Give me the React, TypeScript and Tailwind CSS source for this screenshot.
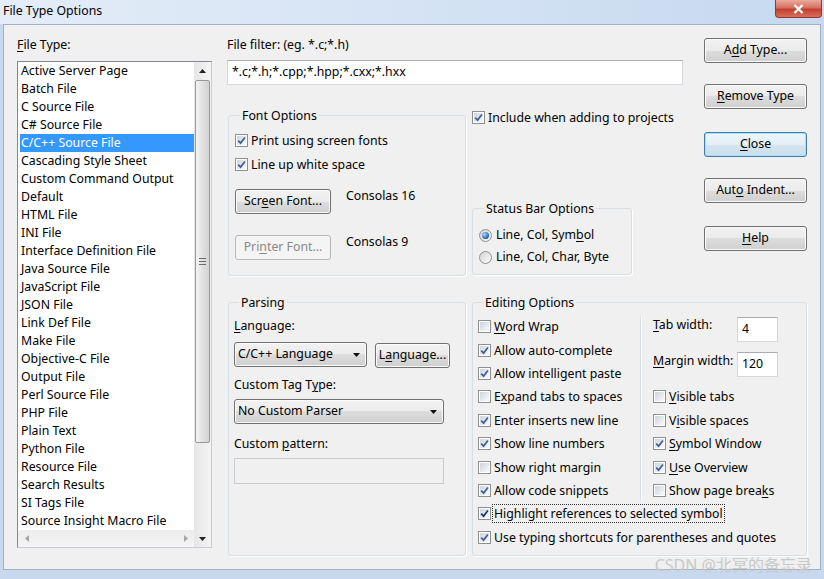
import React from "react";

const files = [
  "Active Server Page",
  "Batch File",
  "C Source File",
  "C# Source File",
  "C/C++ Source File",
  "Cascading Style Sheet",
  "Custom Command Output",
  "Default",
  "HTML File",
  "INI File",
  "Interface Definition File",
  "Java Source File",
  "JavaScript File",
  "JSON File",
  "Link Def File",
  "Make File",
  "Objective-C File",
  "Output File",
  "Perl Source File",
  "PHP File",
  "Plain Text",
  "Python File",
  "Resource File",
  "Search Results",
  "SI Tags File",
  "Source Insight Macro File",
];

const U = ({ children }: { children: React.ReactNode }) => (
  <span className="underline decoration-1 underline-offset-[2px]">{children}</span>
);

const Box = ({ on, dark }: { on?: boolean; dark?: boolean }) => (
  <span className="w-[13px] h-[13px] shrink-0 border border-[#8e8f8f] bg-white p-[1px] flex">
    <span className="flex-1 bg-[linear-gradient(135deg,#cfd5dd,#f8f9fb)] flex items-center justify-center">
      {on && (
        <svg width="9" height="9" viewBox="0 0 9 9">
          <path
            d="M1.2 4.6 L3.6 7.1 L7.9 1.6"
            fill="none"
            stroke={dark ? "#16367a" : "#3d5f96"}
            strokeWidth="1.7"
          />
        </svg>
      )}
    </span>
  </span>
);

const CheckRow = ({
  on,
  dark,
  children,
  className = "",
  focus,
}: {
  on?: boolean;
  dark?: boolean;
  children: React.ReactNode;
  className?: string;
  focus?: boolean;
}) => (
  <div className={"flex items-center " + className}>
    <Box on={on} dark={dark} />
    <span
      className={
        "ml-[1px] px-[1px] leading-[17px] whitespace-nowrap border border-dotted " +
        (focus ? "border-[#333]" : "border-transparent")
      }
    >
      {children}
    </span>
  </div>
);

const Radio = ({ on, children, className = "" }: { on?: boolean; children: React.ReactNode; className?: string }) => (
  <div className={"flex items-center " + className}>
    <span className="w-[13px] h-[13px] shrink-0 rounded-full border border-[#8e8f8f] bg-[linear-gradient(135deg,#d4d4d4,#fbfbfb)] flex items-center justify-center">
      {on && (
        <span className="w-[7px] h-[7px] rounded-full bg-[radial-gradient(circle_at_35%_35%,#a8dcff,#1c5f9f_70%)]" />
      )}
    </span>
    <span className="ml-[4px] leading-[16px] whitespace-nowrap">{children}</span>
  </div>
);

const Btn = ({
  children,
  className = "",
  kind = "normal",
}: {
  children: React.ReactNode;
  className?: string;
  kind?: "normal" | "default" | "disabled";
}) => {
  const look =
    kind === "default"
      ? "border-[#3c7fb1] bg-[linear-gradient(#eef6fc_0%,#e3eef7_50%,#d5e5f1_50%,#cbdeec_100%)] shadow-[inset_0_0_0_1px_#a9ddf8]"
      : kind === "disabled"
      ? "border-[#b5b9bc] bg-[#f4f4f4] text-[#8a8a8a]"
      : "border-[#707070] bg-[linear-gradient(#f2f2f2_0%,#ebebeb_50%,#dddddd_50%,#cfcfcf_100%)] shadow-[inset_0_0_0_1px_#fbfbfb]";
  return (
    <div
      className={
        "h-[25px] shrink-0 rounded-[3px] border flex items-center justify-center whitespace-nowrap " +
        look +
        " " +
        className
      }
    >
      {children}
    </div>
  );
};

const Combo = ({ children, className = "" }: { children: React.ReactNode; className?: string }) => (
  <div
    className={
      "h-[25px] shrink-0 rounded-[3px] border border-[#707070] bg-[linear-gradient(#f2f2f2_0%,#ebebeb_50%,#dddddd_50%,#cfcfcf_100%)] shadow-[inset_0_0_0_1px_#fbfbfb] flex items-center pl-[3px] pr-[6px] " +
      className
    }
  >
    <span className="flex-1 whitespace-nowrap">{children}</span>
    <svg width="7" height="4" viewBox="0 0 7 4">
      <path d="M0 0 H7 L3.5 4 Z" fill="#111" />
    </svg>
  </div>
);

const Input = ({ children, className = "", disabled }: { children?: React.ReactNode; className?: string; disabled?: boolean }) => (
  <div
    className={
      "shrink-0 border flex items-center pl-[4px] whitespace-nowrap " +
      (disabled
        ? "border-[#c9cccf] bg-[#f0f0f0]"
        : "border-[#d5d9de] border-t-[#abadb3] bg-white") +
      " " +
      className
    }
  >
    {children}
  </div>
);

const Group = ({
  title,
  children,
  className = "",
}: {
  title: string;
  children: React.ReactNode;
  className?: string;
}) => (
  <fieldset className={"border border-[#d5dfe5] rounded-[3px] shadow-[1px_1px_0_#fff] " + className}>
    <legend className="ml-[5px] px-[2px] leading-[17px]">{title}</legend>
    {children}
  </fieldset>
);

const Arrow = ({ dir, color = "#222" }: { dir: "up" | "down" | "left" | "right"; color?: string }) => {
  const d = {
    up: "M0 4 L3.5 0 L7 4 Z",
    down: "M0 0 H7 L3.5 4 Z",
    left: "M4 0 V7 L0 3.5 Z",
    right: "M0 0 V7 L4 3.5 Z",
  }[dir];
  const horiz = dir === "left" || dir === "right";
  return (
    <svg width={horiz ? 4 : 7} height={horiz ? 7 : 4} viewBox={horiz ? "0 0 4 7" : "0 0 7 4"}>
      <path d={d} fill={color} />
    </svg>
  );
};

export default function App() {
  return (
    <div className="relative w-[824px] h-[579px] overflow-hidden flex flex-col bg-[#c8d9ee] font-['Noto_Sans',sans-serif] text-[12.3px] text-black">
      {/* title bar */}
      <div className="h-[24px] shrink-0 flex items-start justify-between bg-[linear-gradient(90deg,#e4edf8,#d2e1f3_60%,#c6d9ef)]">
        <span className="pl-[3px] pt-[3px] leading-[16px]">File Type Options</span>
        <div className="mr-[2px] w-[47px] h-[18px] rounded-b-[4px] border border-t-0 border-[#8e3a32] bg-[linear-gradient(#e9a99c_0%,#d7705f_45%,#c2402f_55%,#d8705a_100%)] flex items-center justify-center">
          <svg width="11" height="10" viewBox="0 0 11 10">
            <path d="M1.5 1 L9.5 9 M9.5 1 L1.5 9" stroke="#fff" strokeWidth="2.4" />
          </svg>
        </div>
      </div>

      {/* dialog body */}
      <div className="h-[546px] ml-[3px] mr-[3px] border border-[#9fb1c7] bg-[#f0f0f0] flex pl-[13px] pt-[12px]">
        {/* file type list */}
        <div className="w-[195px] shrink-0 flex flex-col">
          <div className="leading-[16px]">
            <U>F</U>ile Type:
          </div>
          <div className="mt-[8px] h-[487px] border border-[#828790] border-r-[#c9ccd2] border-b-[#c9ccd2] bg-white flex">
            <div className="w-[176px] flex flex-col">
              <div className="flex-1">
                {files.map((f) => (
                  <div
                    key={f}
                    className={
                      "ml-[2px] h-[18px] pl-[1px] leading-[18px] whitespace-nowrap " +
                      (f === "C/C++ Source File" ? "bg-[#3399ff] text-white" : "")
                    }
                  >
                    {f}
                  </div>
                ))}
              </div>
              <div className="h-[17px] flex items-center justify-between pl-[7px] pr-[6px] bg-[linear-gradient(#ececec,#f5f5f5)]">
                <Arrow dir="left" color="#a6a6a6" />
                <Arrow dir="right" color="#a6a6a6" />
              </div>
            </div>
            <div className="w-[17px] flex flex-col bg-[linear-gradient(90deg,#e6e6e6,#f4f4f4)]">
              <div className="h-[17px] flex items-center justify-center">
                <Arrow dir="up" />
              </div>
              <div className="mt-[1px] mx-[1px] h-[363px] rounded-[2px] border border-[#999] bg-[linear-gradient(90deg,#f4f4f4,#dedede_60%,#d2d2d2)] flex flex-col items-center justify-center gap-[2px]">
                <span className="w-[7px] h-[1px] bg-[#6a6a6a]" />
                <span className="w-[7px] h-[1px] bg-[#6a6a6a]" />
                <span className="w-[7px] h-[1px] bg-[#6a6a6a]" />
              </div>
              <div className="flex-1" />
              <div className="h-[17px] flex items-center justify-center">
                <Arrow dir="down" />
              </div>
            </div>
          </div>
        </div>

        {/* right area */}
        <div className="ml-[15px] w-[580px] flex flex-col">
          <div className="flex">
            <div className="w-[456px] flex flex-col">
              <div className="leading-[16px]">File filter: (eg. *.c;*.h)</div>
              <Input className="mt-[7px] h-[25px]">*.c;*.h;*.cpp;*.hpp;*.cxx;*.hxx</Input>
              <div className="mt-[22px] flex items-start">
                <Group title="Font Options" className="ml-[1px] w-[238px] pl-[6px] pb-[15px]">
                  <CheckRow on className="mt-[7px] h-[18px]">
                    Print using screen fonts
                  </CheckRow>
                  <CheckRow on className="mt-[6px] h-[18px]">
                    Line up white space
                  </CheckRow>
                  <div className="mt-[16px] flex items-start">
                    <Btn className="w-[96px]">
                      <span>
                        Scr<U>e</U>en Font...
                      </span>
                    </Btn>
                    <span className="ml-[15px] mt-[-1px] leading-[16px]">Consolas 16</span>
                  </div>
                  <div className="mt-[21px] flex items-start">
                    <Btn kind="disabled" className="w-[96px]">
                      <span>
                        Pri<U>n</U>ter Font...
                      </span>
                    </Btn>
                    <span className="ml-[15px] mt-[-1px] leading-[16px]">Consolas 9</span>
                  </div>
                </Group>
                <div className="ml-[6px] flex flex-col">
                  <CheckRow on className="mt-[1px] h-[18px]">
                    Include when adding to projects
                  </CheckRow>
                  <Group title="Status Bar Options" className="mt-[74px] w-[160px] pl-[6px] pb-[8px]">
                    <Radio on className="mt-[9px] h-[18px]">
                      Line, Col, Sym<U>b</U>ol
                    </Radio>
                    <Radio className="mt-[4px] h-[18px]">Line, Col, Char, Byte</Radio>
                  </Group>
                </div>
              </div>
            </div>
            <div className="ml-[21px] w-[103px] flex flex-col">
              <Btn className="mt-[1px]">
                <span>
                  A<U>d</U>d Type...
                </span>
              </Btn>
              <Btn className="mt-[21px]">
                <span>
                  <U>R</U>emove Type
                </span>
              </Btn>
              <Btn kind="default" className="mt-[23px]">
                <span>
                  <U>C</U>lose
                </span>
              </Btn>
              <Btn className="mt-[21px]">
                <span>
                  Aut<U>o</U> Indent...
                </span>
              </Btn>
              <Btn className="mt-[23px]">
                <span>
                  <U>H</U>elp
                </span>
              </Btn>
            </div>
          </div>

          <div className="mt-[18px] flex items-start">
            <Group title="Parsing" className="ml-[1px] w-[238px] h-[262px] pl-[5px]">
              <div className="mt-[7px] leading-[16px]">
                <U>L</U>anguage:
              </div>
              <div className="mt-[8px] flex items-start">
                <Combo className="w-[133px]">C/C++ Language</Combo>
                <Btn className="ml-[8px] w-[75px] mt-[1px]">
                  <span>
                    L<U>a</U>nguage...
                  </span>
                </Btn>
              </div>
              <div className="mt-[9px] leading-[16px]">
                Custom Tag T<U>y</U>pe:
              </div>
              <Combo className="mt-[6px] w-[210px]">No Custom Parser</Combo>
              <div className="mt-[12px] leading-[16px]">
                Custom <U>p</U>attern:
              </div>
              <Input disabled className="mt-[6px] h-[26px] w-[210px]" />
            </Group>

            <Group title="Editing Options" className="ml-[6px] w-[335px] h-[262px] pl-[5px]">
              <div className="mt-[4px] flex">
                <div className="w-[162px] flex flex-col">
                  <CheckRow className="h-[23.4px]">
                    <U>W</U>ord Wrap
                  </CheckRow>
                  <CheckRow on className="h-[23.4px]">
                    Allow auto-complete
                  </CheckRow>
                  <CheckRow on className="h-[23.4px]">
                    Allow intelligent paste
                  </CheckRow>
                  <CheckRow className="h-[23.4px]">
                    E<U>x</U>pand tabs to spaces
                  </CheckRow>
                  <CheckRow on className="h-[23.4px]">
                    Enter inserts new line
                  </CheckRow>
                  <CheckRow on className="h-[23.4px]">
                    Show line numbers
                  </CheckRow>
                  <CheckRow className="h-[23.4px]">
                    Show right margin
                  </CheckRow>
                  <CheckRow on className="h-[23.4px]">
                    Allow code snippets
                  </CheckRow>
                </div>
                <div className="mt-[2px] mb-[1px] w-[1px] bg-[#d5dfe5] shadow-[1px_0_0_#fff]" />
                <div className="pl-[12px] flex flex-col">
                  <div className="h-[70.2px]">
                    <div className="mt-[2px] flex items-start">
                      <span className="w-[84px] leading-[16px]">
                        <U>T</U>ab width:
                      </span>
                      <Input className="h-[25px] w-[41px]">4</Input>
                    </div>
                    <div className="mt-[10px] flex items-start">
                      <span className="w-[84px] leading-[16px] mt-[1px]">
                        <U>M</U>argin width:
                      </span>
                      <Input className="h-[25px] w-[41px]">120</Input>
                    </div>
                  </div>
                  <CheckRow className="h-[23.4px]">
                    <U>V</U>isible tabs
                  </CheckRow>
                  <CheckRow className="h-[23.4px]">
                    V<U>i</U>sible spaces
                  </CheckRow>
                  <CheckRow on className="h-[23.4px]">
                    <U>S</U>ymbol Window
                  </CheckRow>
                  <CheckRow on className="h-[23.4px]">
                    <U>U</U>se Overview
                  </CheckRow>
                  <CheckRow className="h-[23.4px]">
                    Show page brea<U>k</U>s
                  </CheckRow>
                </div>
              </div>
              <CheckRow on dark focus className="h-[23.4px]">
                Highlight references to selected symbol
              </CheckRow>
              <CheckRow on className="h-[23.4px]">
                Use typing shortcuts for parentheses and quotes
              </CheckRow>
            </Group>
          </div>
        </div>
      </div>

      <div className="absolute right-[12px] bottom-[4px] text-[16px] leading-[20px] text-[#c9c9c9] font-['Noto_Sans','Noto_Sans_CJK_SC',sans-serif]">
        CSDN @北冥的备忘录
      </div>
    </div>
  );
}
